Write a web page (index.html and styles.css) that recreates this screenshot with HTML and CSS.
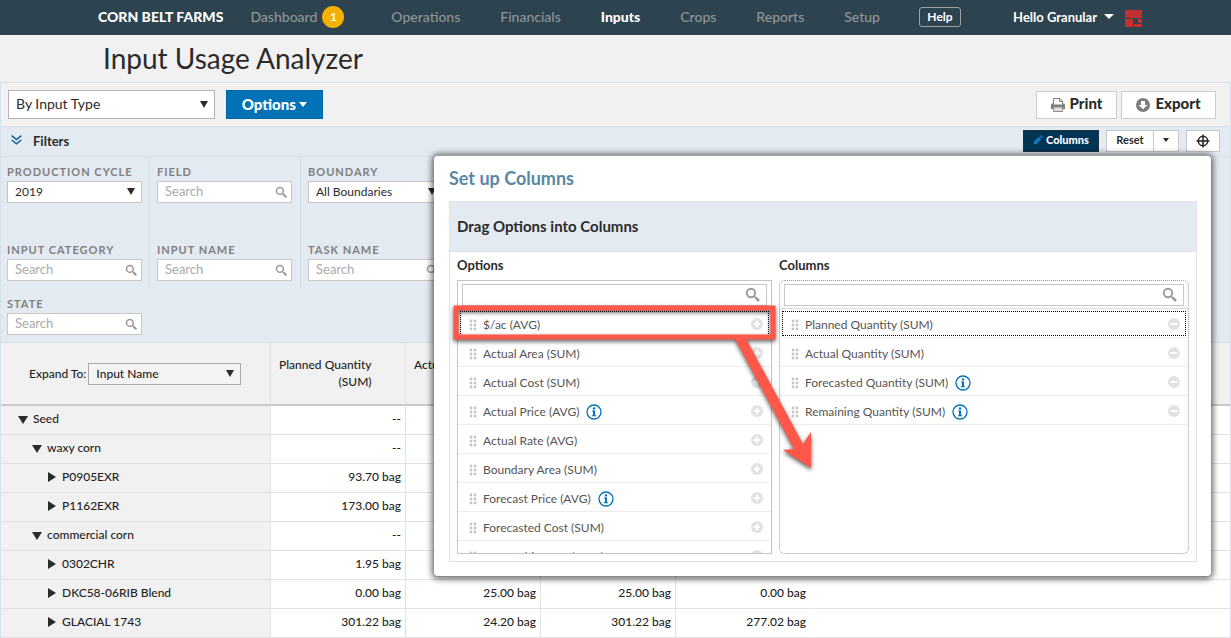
FILE: index.html
```html
<!DOCTYPE html>
<html lang="en">
<head>
<meta charset="utf-8">
<title>Input Usage Analyzer</title>
<link rel="stylesheet" href="styles.css">
</head>
<body>
<svg class="defs" width="0" height="0" aria-hidden="true">
  <symbol id="search" viewBox="0 0 16 16"><circle cx="6" cy="6" r="4.2" fill="none" stroke="currentColor" stroke-width="1.9"/><path d="M9 9l2 2" stroke="currentColor" stroke-width="1.6"/><path d="M10.6 10.6l3.4 3.4" stroke="currentColor" stroke-width="2.6"/></symbol>
  <symbol id="grip" viewBox="0 0 8 12"><g fill="currentColor"><circle cx="2" cy="2" r="1.4"/><circle cx="6" cy="2" r="1.4"/><circle cx="2" cy="6" r="1.4"/><circle cx="6" cy="6" r="1.4"/><circle cx="2" cy="10" r="1.4"/><circle cx="6" cy="10" r="1.4"/></g></symbol>
  <symbol id="plus" viewBox="0 0 12 12"><circle cx="6" cy="6" r="6" fill="currentColor"/><path d="M6 2.8v6.4M2.8 6h6.4" stroke="#fff" stroke-width="2"/></symbol>
  <symbol id="minus" viewBox="0 0 12 12"><circle cx="6" cy="6" r="6" fill="currentColor"/><path d="M2.4 6h7.2" stroke="#fff" stroke-width="2"/></symbol>
  <symbol id="info" viewBox="0 0 16 16"><circle cx="8" cy="8" r="7" fill="none" stroke="currentColor" stroke-width="1.3"/><circle cx="8" cy="4.4" r="1.2" fill="currentColor"/><path d="M6 6.6h3v4.6h1.2v1H5.8v-1H7V7.6H6z" fill="currentColor"/></symbol>
</svg>

<header class="topbar">
  <strong class="brand">CORN BELT FARMS</strong>
  <nav class="nav">
    <a class="with-badge" href="#">Dashboard <span class="badge">1</span></a>
    <a href="#">Operations</a>
    <a href="#">Financials</a>
    <a class="current" href="#">Inputs</a>
    <a href="#">Crops</a>
    <a href="#">Reports</a>
    <a href="#">Setup</a>
  </nav>
  <button class="help" type="button">Help</button>
  <button class="account" type="button">Hello Granular <i class="caret"></i></button>
  <svg class="logo" viewBox="0 0 17 17" aria-hidden="true"><path fill="#c12f2f" d="M0 0h17v8H0zM0 9h8v8H0zM13 9h4v4h-4zM9 14h8v3H9z"/></svg>
</header>

<h1 class="page-title">Input Usage Analyzer</h1>

<main class="report">
  <div class="toolbar">
    <span class="select grouping"><select aria-label="Group by"><option>By Input Type</option></select></span>
    <button class="primary" type="button">Options <i class="caret"></i></button>
    <div class="actions">
      <button class="action" type="button"><svg viewBox="0 0 14 14" aria-hidden="true"><path fill="#7d7d7d" d="M0 6.500Q0 5.500 1.500 5.500h11Q14 5.500 14 6.500V11H0z"/><path fill="#fff" stroke="#7d7d7d" d="M2.500 6.500v-6h6.500l2.500 2.500v3.500M8.500 0.500v3h3"/><path fill="#ddd" stroke="#8d8d8d" d="M2.500 9h9v4.500h-9z"/></svg>Print</button>
      <button class="action" type="button"><svg viewBox="0 0 14 14" aria-hidden="true"><circle cx="7" cy="7" r="7" fill="#7d7d7d"/><path fill="#fff" d="M5 3h4v4h2.500L7 11.200 2.500 7H5z"/></svg>Export</button>
    </div>
  </div>

  <div class="filter-bar">
    <button class="filters-toggle" type="button"><svg viewBox="0 0 11 10" aria-hidden="true"><path d="M0.700 0.700l4.800 3.800L10.300 0.700M0.700 5l4.800 3.800L10.300 5" fill="none" stroke="#0e5f96" stroke-width="1.500"/></svg>Filters</button>
    <button class="columns-button" type="button"><svg viewBox="0 0 10 10" aria-hidden="true"><path fill="#1278bd" d="M0.500 9.500l0.500-3 4.700-4.700 2.500 2.500L3.500 9zM6.400 1.100L7.500 0 10 2.500 8.900 3.600z"/></svg>Columns</button>
    <div class="split"><button type="button">Reset</button><button type="button" aria-label="More reset options"><i class="caret"></i></button></div>
    <button class="target" type="button" aria-label="Center"><svg viewBox="0 0 14 14" aria-hidden="true"><circle cx="7" cy="7" r="4.700"/><path d="M7 0.500v13M0.500 7h13"/></svg></button>
  </div>

  <form class="filters">
    <div class="filter"><label for="cycle">Production Cycle</label><span class="select"><select id="cycle"><option>2019</option></select></span></div>
    <div class="filter"><label for="field">Field</label><span class="search"><input id="field" type="text" placeholder="Search"><svg><use href="#search"/></svg></span></div>
    <div class="filter"><label for="boundary">Boundary</label><span class="select"><select id="boundary"><option>All Boundaries</option></select></span></div>
    <div class="filter"><label for="category">Input Category</label><span class="search"><input id="category" type="text" placeholder="Search"><svg><use href="#search"/></svg></span></div>
    <div class="filter"><label for="name">Input Name</label><span class="search"><input id="name" type="text" placeholder="Search"><svg><use href="#search"/></svg></span></div>
    <div class="filter"><label for="task">Task Name</label><span class="search"><input id="task" type="text" placeholder="Search"><svg><use href="#search"/></svg></span></div>
    <div class="filter"><label for="state">State</label><span class="search"><input id="state" type="text" placeholder="Search"><svg><use href="#search"/></svg></span></div>
  </form>

  <table class="usage">
    <colgroup><col class="c-name"><col class="c-num"><col class="c-num"><col class="c-num"><col class="c-num"><col></colgroup>
    <thead>
      <tr>
        <th class="expand"><div><label for="expand">Expand To:</label><span class="select"><select id="expand"><option>Input Name</option></select></span></div></th>
        <th><span>Planned Quantity<br>(SUM)</span></th>
        <th><span>Actual Quantity<br>(SUM)</span></th>
        <th></th><th></th><th></th>
      </tr>
    </thead>
    <tbody>
      <tr><th class="l1 open" scope="row">Seed</th><td>--</td><td></td><td></td><td></td><td></td></tr>
      <tr><th class="l2 open" scope="row">waxy corn</th><td>--</td><td></td><td></td><td></td><td></td></tr>
      <tr><th class="l3" scope="row">P0905EXR</th><td>93.70 bag</td><td></td><td></td><td></td><td></td></tr>
      <tr><th class="l3" scope="row">P1162EXR</th><td>173.00 bag</td><td></td><td></td><td></td><td></td></tr>
      <tr><th class="l2 open" scope="row">commercial corn</th><td>--</td><td></td><td></td><td></td><td></td></tr>
      <tr><th class="l3" scope="row">0302CHR</th><td>1.95 bag</td><td></td><td></td><td></td><td></td></tr>
      <tr><th class="l3" scope="row">DKC58-06RIB Blend</th><td>0.00 bag</td><td>25.00 bag</td><td>25.00 bag</td><td>0.00 bag</td><td></td></tr>
      <tr><th class="l3" scope="row">GLACIAL 1743</th><td>301.22 bag</td><td>24.20 bag</td><td>301.22 bag</td><td>277.02 bag</td><td></td></tr>
    </tbody>
  </table>
</main>

<section class="dialog" role="dialog" aria-labelledby="dialog-title">
  <h2 id="dialog-title">Set up Columns</h2>
  <div class="panel">
    <h3>Drag Options into Columns</h3>
    <div class="lists">
      <div class="list-block">
        <label for="find-option">Options</label>
        <div class="list">
          <span class="search big"><input id="find-option" type="text"><svg><use href="#search"/></svg></span>
          <ul>
            <li class="focused"><svg class="grip"><use href="#grip"/></svg>$/ac (AVG)<button type="button" aria-label="Add"><svg><use href="#plus"/></svg></button></li>
            <li><svg class="grip"><use href="#grip"/></svg>Actual Area (SUM)<button type="button" aria-label="Add"><svg><use href="#plus"/></svg></button></li>
            <li><svg class="grip"><use href="#grip"/></svg>Actual Cost (SUM)<button type="button" aria-label="Add"><svg><use href="#plus"/></svg></button></li>
            <li><svg class="grip"><use href="#grip"/></svg>Actual Price (AVG)<svg class="info"><use href="#info"/></svg><button type="button" aria-label="Add"><svg><use href="#plus"/></svg></button></li>
            <li><svg class="grip"><use href="#grip"/></svg>Actual Rate (AVG)<button type="button" aria-label="Add"><svg><use href="#plus"/></svg></button></li>
            <li><svg class="grip"><use href="#grip"/></svg>Boundary Area (SUM)<button type="button" aria-label="Add"><svg><use href="#plus"/></svg></button></li>
            <li><svg class="grip"><use href="#grip"/></svg>Forecast Price (AVG)<svg class="info"><use href="#info"/></svg><button type="button" aria-label="Add"><svg><use href="#plus"/></svg></button></li>
            <li><svg class="grip"><use href="#grip"/></svg>Forecasted Cost (SUM)<button type="button" aria-label="Add"><svg><use href="#plus"/></svg></button></li>
            <li><svg class="grip"><use href="#grip"/></svg>Ownership Area (SUM)<button type="button" aria-label="Add"><svg><use href="#plus"/></svg></button></li>
          </ul>
        </div>
      </div>
      <div class="list-block chosen">
        <label for="find-column">Columns</label>
        <div class="list">
          <span class="search big"><input id="find-column" type="text"><svg><use href="#search"/></svg></span>
          <ul>
            <li class="focused"><svg class="grip"><use href="#grip"/></svg>Planned Quantity (SUM)<button type="button" aria-label="Remove"><svg><use href="#minus"/></svg></button></li>
            <li><svg class="grip"><use href="#grip"/></svg>Actual Quantity (SUM)<button type="button" aria-label="Remove"><svg><use href="#minus"/></svg></button></li>
            <li><svg class="grip"><use href="#grip"/></svg>Forecasted Quantity (SUM)<svg class="info"><use href="#info"/></svg><button type="button" aria-label="Remove"><svg><use href="#minus"/></svg></button></li>
            <li><svg class="grip"><use href="#grip"/></svg>Remaining Quantity (SUM)<svg class="info"><use href="#info"/></svg><button type="button" aria-label="Remove"><svg><use href="#minus"/></svg></button></li>
          </ul>
        </div>
      </div>
    </div>
  </div>
  <svg class="callout" viewBox="0 0 370 175" aria-hidden="true">
    <path d="M280 30L341 144 330 145 358 163V127L350 139 291 30z" fill="#ff584a"/>
    <rect x="3" y="3" width="317" height="29" fill="none" stroke="#ff584a" stroke-width="5"/>
  </svg>
</section>
</body>
</html>
```
FILE: styles.css
```css
* { box-sizing: border-box; }
body {
  margin: 0;
  min-height: 100vh;
  position: relative;
  overflow: hidden;
  background: #fff;
  color: #2b2b2b;
  font: 13px/16px Lato, "Open Sans", sans-serif;
}
button, input, select { font: inherit; color: inherit; margin: 0; }
button { padding: 0; border: 0; background: none; white-space: nowrap; }
h1, h2, h3, ul { margin: 0; padding: 0; font-weight: inherit; }
.defs { position: absolute; }

.caret {
  display: inline-block;
  border: 4px solid transparent;
  border-top: 5px solid currentColor;
  border-bottom: 0;
}

/* Top bar */
.topbar {
  display: flex;
  align-items: center;
  height: 35px;
  padding: 0 89px 2px 98px;
  background: #2d4350;
  color: #fff;
  font-size: 14px;
}
.brand { font-weight: 900; white-space: nowrap; }
.nav { display: flex; align-items: center; gap: 40px; margin-left: 27px; }
.nav a { color: #8f9598; text-decoration: none; font-weight: 500; }
.nav .current { color: #fff; font-weight: 900; }
.with-badge { display: flex; align-items: center; gap: 5px; margin-right: 7px; }
.badge {
  width: 22px;
  height: 22px;
  border-radius: 50%;
  background: #f5b000;
  color: #fff;
  font-size: 12px;
  font-weight: 700;
  line-height: 22px;
  text-align: center;
}
.help {
  width: 42px;
  height: 20px;
  margin-left: 39px;
  border: 1px solid #9aa3a8;
  border-radius: 3px;
  font-size: 12px;
  font-weight: 700;
}
.account { display: flex; align-items: center; gap: 7px; margin-left: auto; font-size: 13px; font-weight: 700; }
.topbar .caret { border-width: 5px 5px 0; }
.logo { width: 17px; height: 17px; margin: 3px 0 0 11px; }

.page-title {
  height: 47px;
  padding-left: 103px;
  background: #f1f1f1;
  font-size: 28px;
  line-height: 46px;
}

.report { border: 1px solid #d7e1ea; }

/* Toolbar */
.toolbar {
  display: flex;
  align-items: center;
  height: 44px;
  padding: 0 14px 0 7px;
  background: #f1f1f1;
  border-bottom: 1px solid #d3dfe6;
}
.select { position: relative; display: block; }
.select::after {
  content: "";
  position: absolute;
  top: 50%;
  right: 7px;
  margin-top: -4px;
  border: 4px solid transparent;
  border-top: 7px solid #2b2b2b;
  border-bottom: 0;
  pointer-events: none;
}
.select select {
  display: block;
  width: 100%;
  height: 22px;
  padding: 0 7px;
  appearance: none;
  border: 1px solid #c4c4c4;
  border-radius: 0;
  background: #fff;
  font-size: 12px;
}
.grouping { width: 207px; }
.grouping select { height: 29px; padding-bottom: 2px; border-color: #b3b3b3; font-size: 14px; }
.primary {
  width: 97px;
  height: 29px;
  padding-bottom: 2px;
  margin-left: 11px;
  background: #0072b5;
  border: 1px solid #0067a4;
  color: #fff;
  font-size: 15px;
  font-weight: 900;
}
.primary .caret { margin-bottom: 3px; }
.actions { display: flex; gap: 4px; margin-left: auto; }
.action {
  display: flex;
  align-items: center;
  justify-content: center;
  gap: 5px;
  width: 95px;
  height: 28px;
  padding-bottom: 4px;
  border: 1px solid #ccc;
  background: #fff;
  font-size: 15px;
  font-weight: 900;
}
.action:first-child { width: 81px; }
.action svg { width: 14px; height: 14px; margin-top: 4px; }

/* Filter bar */
.filter-bar {
  display: flex;
  align-items: center;
  height: 30px;
  padding: 0 10px 2px;
  background: #e3eaf1;
  border-bottom: 1px solid #d3dfe9;
}
.filters-toggle { display: flex; align-items: center; gap: 11px; margin-right: auto; font-weight: 700; }
.filters-toggle svg { width: 11px; height: 10px; margin-bottom: 2px; }
.columns-button {
  display: flex;
  align-items: center;
  justify-content: center;
  gap: 3px;
  width: 76px;
  height: 22px;
  padding-bottom: 1px;
  background: #003455;
  border: 1px solid #22333f;
  color: #fff;
  font-size: 11px;
  font-weight: 900;
}
.columns-button svg { width: 10px; height: 10px; }
.split { display: flex; margin: 0 7px; }
.split button, .target {
  height: 22px;
  border: 1px solid #c8c8c8;
  background: #fff;
  font-size: 11px;
  font-weight: 700;
}
.split button { width: 48px; padding-bottom: 2px; }
.split button + button { width: 25px; border-left: 0; line-height: 0; }
.split .caret { border-width: 4px 3px 0; }
.target { display: grid; place-items: center; width: 34px; }
.target svg { width: 14px; height: 14px; fill: none; stroke: #222; stroke-width: 1.5; }

/* Filters */
.filters {
  display: grid;
  grid-template-columns: 149px 151px 151px;
  grid-template-rows: 78px 54px 53px;
  background: #e3eaf1;
  border-bottom: 1px solid #d3e1ea;
}
.filter { padding: 7px 7px 0 6px; border-right: 1px solid #d5dfe9; }
.filter:nth-child(3n+2), .filter:nth-child(3n) { padding-left: 7px; padding-right: 8px; }
.filter:nth-child(3n), .filter:last-child { border-right-color: transparent; }
.filter label {
  display: block;
  margin-bottom: 1px;
  color: #808080;
  font-size: 11px;
  font-weight: 700;
  letter-spacing: 1px;
  text-transform: uppercase;
}
.search { position: relative; display: block; color: #999; }
.search input {
  display: block;
  width: 100%;
  height: 22px;
  padding: 0 26px 2px 7px;
  border: 1px solid #c8c8c8;
  border-radius: 0;
  background: #fff;
  color: #2b2b2b;
}
.search input::placeholder { color: #aaa; opacity: 1; }
.search svg { position: absolute; top: 5px; right: 4px; width: 13px; height: 13px; }

/* Usage table */
.usage { width: 100%; table-layout: fixed; border-collapse: separate; border-spacing: 0; font-size: 12px; }
.c-name { width: 270px; }
.c-num { width: 135px; }
.usage th, .usage td {
  height: 29px;
  padding: 0 4px 2px 0;
  border-bottom: 1px solid #e2e2e2;
  border-right: 1px solid #e2e2e2;
  color: #1f1f1f;
  text-align: right;
  font-weight: 500;
  white-space: nowrap;
}
.usage tr > :nth-child(5) { border-right-color: transparent; }
.usage tr > :last-child { border-right: 0; }
.usage thead th {
  height: 63px;
  padding: 0 0 2px 8px;
  vertical-align: middle;
  text-align: left;
  background: #f1f1f1;
  border-bottom: 2px solid #c9c9c9;
  line-height: 17px;
}
.usage th span { display: inline-block; text-align: right; }
.usage thead .expand { padding: 0 0 0 28px; }
.expand div { display: flex; align-items: center; gap: 2px; }
.usage .expand .select { width: 153px; text-align: left; }
.expand select { background: #f3f3f3; border-color: #aaa; }
.usage tbody th { text-align: left; background: #f1f1f1; }
.usage tbody th::before {
  content: "";
  display: inline-block;
  margin-right: 6px;
  border: 5px solid transparent;
  border-left: 8px solid #2b2b2b;
  border-right: 0;
  vertical-align: -1px;
}
.usage tbody .open::before {
  margin-right: 5px;
  border: 5px solid transparent;
  border-top: 8px solid #2b2b2b;
  border-bottom: 0;
}
.usage .l1 { padding-left: 17px; }
.usage .l2 { padding-left: 31px; }
.usage .l3 { padding-left: 47px; }

/* Column setup dialog */
.dialog {
  position: absolute;
  top: 155px;
  left: 434px;
  right: 20px;
  padding: 11px 14px 14px 15px;
  background: #fff;
  border: 1px solid #a6a6a6;
  border-width: 1px 0 0;
  border-radius: 4px;
  box-shadow: 0 1px 6px 2px rgba(0, 0, 0, .6);
}
.dialog h2 { margin-bottom: 12px; color: #5888a3; font-size: 18px; font-weight: 700; line-height: 22px; }
.panel { border: 1px solid #e2e2e2; }
.panel h3 {
  padding: 0 7px;
  background: #e3eaf1;
  border-bottom: 1px solid #dfe4e8;
  font-size: 15px;
  font-weight: 700;
  line-height: 49px;
}
.lists { display: flex; gap: 7px; padding: 5px 7px 7px; }
.list-block { flex: 0 0 315px; }
.chosen { flex: 1; }
.list-block > label { display: block; margin-bottom: 7px; font-weight: 700; }
.list { height: 274px; overflow: hidden; border: 1px solid #c4c4c4; }
.chosen .list { border: 1px dotted #999; border-radius: 6px; }
.big { padding: 3px 4px 2px; border-bottom: 1px solid #ddd; }
.big svg { top: 6px; right: 10px; width: 16px; height: 16px; }
.list ul { list-style: none; color: #555; font-size: 12px; }
.list li {
  display: flex;
  align-items: center;
  height: 29px;
  padding: 3px 8px 0 11px;
  border-bottom: 1px solid #ececec;
}
.list li.focused { outline: 1px dotted #000; outline-offset: -3px; }
.grip { width: 8px; height: 12px; margin: 0 6px 0 0; color: #c4c4c4; }
.info { width: 16px; height: 16px; margin-left: 7px; color: #0072b5; }
.list button { margin: 0 0 2px auto; color: #e2e2e2; line-height: 0; }
.list button svg { width: 12px; height: 12px; }

/* Drag direction marker */
.callout {
  position: absolute;
  top: 149px;
  left: 19px;
  width: 370px;
  height: 175px;
  filter: drop-shadow(0 2px 2px rgba(0, 0, 0, .65));
  pointer-events: none;
}
```
